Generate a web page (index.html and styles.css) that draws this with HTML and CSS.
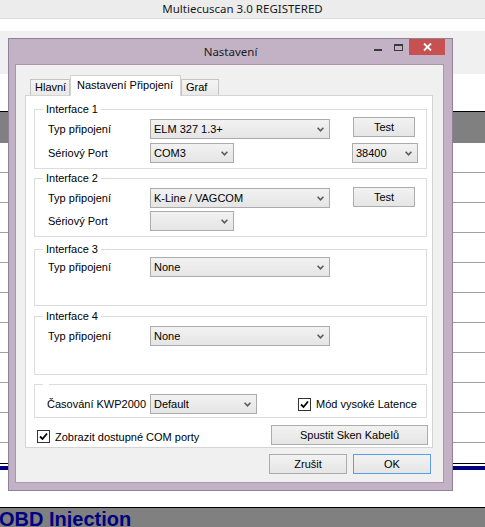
FILE: index.html
```html
<!DOCTYPE html>
<html>
<head>
<meta charset="utf-8">
<title>Nastavení</title>
<link rel="stylesheet" href="styles.css">
</head>
<body>
<div class="screen">
  <div class="app-title">Multiecuscan 3.0 REGISTERED</div>
  <div class="strip-white"></div>
  <div class="toolbar"></div>
  <div class="gap-white"></div>
  <div class="grid-head"></div>
  <div class="grid-row"></div>
  <div class="grid-row"></div>
  <div class="grid-row"></div>
  <div class="grid-row"></div>
  <div class="grid-row"></div>
  <div class="grid-row"></div>
  <div class="grid-row"></div>
  <div class="grid-row"></div>
  <div class="grid-row"></div>
  <div class="grid-row"></div>
  <div class="grid-tail"></div>
  <div class="rule-black"></div>
  <div class="rule-navy"></div>
  <div class="tail-gap"></div>
  <div class="section-head">OBD Injection</div>

  <div class="dialog">
    <div class="caption">
      <span></span>
      <span class="caption-text">Nastavení</span>
      <div class="caption-controls">
        <span class="ctl-min"></span>
        <span class="ctl-max"></span>
        <span class="ctl-close"><svg width="9" height="8" viewBox="0 0 9 8"><path d="M1 0.5 L8 7.5 M8 0.5 L1 7.5" stroke="#fff" stroke-width="1.8" fill="none"/></svg></span>
      </div>
    </div>
    <div class="client">
      <div class="tabs">
        <div class="tab tab-main">Hlavní</div>
        <div class="tab active">Nastavení Připojení</div>
        <div class="tab tab-graf">Graf</div>
      </div>
      <div class="panel">
        <div class="group g1">
          <div class="group-title">Interface 1</div>
          <div class="rows">
            <span class="lbl">Typ připojení</span>
            <div class="combo w-type"><span class="val">ELM 327 1.3+</span><svg class="chev" width="7" height="5" viewBox="0 0 7 5"><polyline points="0.6,0.8 3.5,3.8 6.4,0.8" stroke="#5a5a5a" stroke-width="1.6" fill="none"/></svg></div>
            <div class="btn btn-test">Test</div>
            <span class="lbl">Sériový Port</span>
            <div class="combo w-port"><span class="val">COM3</span><svg class="chev" width="7" height="5" viewBox="0 0 7 5"><polyline points="0.6,0.8 3.5,3.8 6.4,0.8" stroke="#5a5a5a" stroke-width="1.6" fill="none"/></svg></div>
            <div class="combo w-baud"><span class="val">38400</span><svg class="chev" width="7" height="5" viewBox="0 0 7 5"><polyline points="0.6,0.8 3.5,3.8 6.4,0.8" stroke="#5a5a5a" stroke-width="1.6" fill="none"/></svg></div>
          </div>
        </div>
        <div class="group g2">
          <div class="group-title">Interface 2</div>
          <div class="rows tight">
            <span class="lbl">Typ připojení</span>
            <div class="combo w-type"><span class="val">K-Line / VAGCOM</span><svg class="chev" width="7" height="5" viewBox="0 0 7 5"><polyline points="0.6,0.8 3.5,3.8 6.4,0.8" stroke="#5a5a5a" stroke-width="1.6" fill="none"/></svg></div>
            <div class="btn btn-test up1">Test</div>
            <span class="lbl">Sériový Port</span>
            <div class="combo w-port"><span class="val"></span><svg class="chev" width="7" height="5" viewBox="0 0 7 5"><polyline points="0.6,0.8 3.5,3.8 6.4,0.8" stroke="#5a5a5a" stroke-width="1.6" fill="none"/></svg></div>
          </div>
        </div>
        <div class="group g3">
          <div class="group-title">Interface 3</div>
          <div class="rows near">
            <span class="lbl">Typ připojení</span>
            <div class="combo w-type"><span class="val">None</span><svg class="chev" width="7" height="5" viewBox="0 0 7 5"><polyline points="0.6,0.8 3.5,3.8 6.4,0.8" stroke="#5a5a5a" stroke-width="1.6" fill="none"/></svg></div>
          </div>
        </div>
        <div class="group g4">
          <div class="group-title">Interface 4</div>
          <div class="rows">
            <span class="lbl">Typ připojení</span>
            <div class="combo w-type"><span class="val">None</span><svg class="chev" width="7" height="5" viewBox="0 0 7 5"><polyline points="0.6,0.8 3.5,3.8 6.4,0.8" stroke="#5a5a5a" stroke-width="1.6" fill="none"/></svg></div>
          </div>
        </div>
        <div class="group g5">
          <div class="group-title empty"></div>
          <div class="row-kwp">
            <span class="lbl-kwp">Časování KWP2000</span>
            <div class="combo w-kwp"><span class="val">Default</span><svg class="chev" width="7" height="5" viewBox="0 0 7 5"><polyline points="0.6,0.8 3.5,3.8 6.4,0.8" stroke="#5a5a5a" stroke-width="1.6" fill="none"/></svg></div>
            <label class="check-wrap latency">
              <span class="checkbox"><svg width="11" height="11" viewBox="0 0 11 11"><polyline points="2,5.5 4.5,8 9,2.5" stroke="#000" stroke-width="1.8" fill="none"/></svg></span>
              <span>Mód vysoké Latence</span>
            </label>
          </div>
        </div>
        <div class="panel-foot">
          <label class="check-wrap com">
            <span class="checkbox"><svg width="11" height="11" viewBox="0 0 11 11"><polyline points="2,5.5 4.5,8 9,2.5" stroke="#000" stroke-width="1.8" fill="none"/></svg></span>
            <span>Zobrazit dostupné COM porty</span>
          </label>
          <div class="btn btn-scan">Spustit Sken Kabelů</div>
        </div>
      </div>
      <div class="dialog-buttons">
        <div class="btn btn-dlg">Zrušit</div>
        <div class="btn btn-dlg btn-ok">OK</div>
      </div>
    </div>
  </div>
</div>
</body>
</html>
```
FILE: styles.css
```css
* { box-sizing: border-box; }
body {
  margin: 0;
  background: #fff;
  font-family: "Liberation Sans", Arial, sans-serif;
  font-size: 11px;
  color: #000;
}
.screen {
  position: relative;
  width: 485px;
  height: 527px;
  overflow: hidden;
  background: #fff;
}
.app-title {
  height: 19px;
  background: #ececec;
  border-bottom: 1px solid #dcdcdc;
  text-align: center;
  font-family: "Noto Sans", sans-serif;
  font-size: 11.5px;
  line-height: 18px;
  color: #1a1a1a;
}
.strip-white { height: 12px; }
.toolbar { height: 43px; background: #f0f0f0; }
.gap-white { height: 37px; }
.grid-head { height: 32px; border-top: 1px solid #000; background: #808080; }
.grid-row { height: 30px; border-bottom: 1px solid #a0a0a0; }
.grid-tail { height: 20px; }
.rule-black { height: 1px; background: #000; margin-bottom: 2px; }
.rule-navy { height: 4px; background: #000080; }
.tail-gap { height: 37px; }
.section-head {
  border-top: 1px solid #000;
  background: #808080;
  height: 30px;
  font-family: "Liberation Sans", Arial, sans-serif;
  font-weight: bold;
  font-size: 20px;
  line-height: 22px;
  color: #000080;
  text-indent: -1px;
  white-space: nowrap;
}

/* dialog */
.dialog {
  position: absolute;
  left: 8px;
  top: 38px;
  width: 445px;
  height: 453px;
  border: 1px solid #8e8396;
  background: #c3b2c6;
  padding: 0 8px 7px 6px;
  display: flex;
  flex-direction: column;
}
.caption {
  height: 25px;
  margin: 0 -8px 0 -6px;
  display: grid;
  grid-template-columns: 1fr auto 1fr;
  align-items: center;
}
.caption-text {
  font-family: "Noto Sans", sans-serif;
  font-size: 11.5px;
  line-height: 25px;
  color: #1a1a1a;
}
.caption-controls {
  justify-self: end;
  align-self: start;
  display: flex;
  align-items: flex-start;
  margin-right: 7px;
}
.ctl-min {
  width: 8px;
  height: 2px;
  background: #3a3a3a;
  margin-top: 10px;
  margin-right: 12px;
}
.ctl-max {
  width: 9px;
  height: 7px;
  border: 1px solid #3a3a3a;
  border-top-width: 2px;
  margin-top: 5px;
  margin-right: 6px;
}
.ctl-close {
  width: 36px;
  height: 16px;
  background: #c75050;
  display: flex;
  align-items: center;
  justify-content: center;
}
.client {
  height: 419px;
  border: 1px solid #a898aa;
  background: #f0f0f0;
  padding: 10px 10px 0 9px;
  display: flex;
  flex-direction: column;
}
.tabs {
  display: flex;
  align-items: flex-end;
  height: 20px;
  padding-left: 5px;
}
.tab {
  height: 16px;
  border: 1px solid #c4c4c4;
  border-bottom: none;
  background: linear-gradient(#f4f4f4, #e9e9e9);
  padding-left: 4px;
  line-height: 15px;
  white-space: nowrap;
}
.tab-main { width: 40px; }
.tab-graf { width: 38px; }
.tab.active {
  width: 111px;
  height: 21px;
  margin-bottom: -1px;
  background: #fff;
  border-color: #d2d2d2;
  padding-left: 6px;
  line-height: 19px;
  position: relative;
  z-index: 1;
}
.panel {
  height: 353px;
  border: 1px solid #d4d4d4;
  background: #fff;
  padding: 13px 5px 0 8px;
  display: flex;
  flex-direction: column;
}
.group {
  width: 393px;
  border: 1px solid #dcdcdc;
  display: flex;
  flex-direction: column;
}
.group-title {
  align-self: flex-start;
  height: 14px;
  margin: -8px 0 0 8px;
  padding: 0 3px;
  background: #fff;
  line-height: 14px;
  white-space: nowrap;
}
.group-title.empty { width: 6px; padding: 0; }
.g1 { height: 60px; }
.g2 { height: 59px; margin-top: 9px; }
.g3 { height: 57px; margin-top: 12px; }
.g4 { height: 59px; margin-top: 10px; }
.g5 { height: 34px; margin-top: 9px; }
.rows {
  display: grid;
  grid-template-columns: 102px 202px auto;
  grid-auto-rows: 20px;
  row-gap: 4px;
  align-items: center;
  margin-top: 3px;
  padding-left: 13px;
}
.rows.tight { row-gap: 3px; }
.rows.near { margin-top: 1px; }
.lbl { white-space: nowrap; }
.combo {
  justify-self: start;
  height: 20px;
  border: 1px solid #acacac;
  background: linear-gradient(#f2f2f2, #e5e5e5);
  display: flex;
  align-items: center;
  padding: 0 5px 0 3px;
  white-space: nowrap;
}
.combo .val { flex: 1; }
.chev { flex: none; }
.w-type { width: 180px; }
.w-port { width: 84px; }
.w-baud { width: 66px; }
.w-kwp { width: 107px; }
.btn {
  height: 20px;
  border: 1px solid #acacac;
  background: linear-gradient(#f2f2f2, #e5e5e5);
  display: flex;
  align-items: center;
  justify-content: center;
  white-space: nowrap;
}
.btn-test {
  width: 62px;
  justify-self: start;
  align-self: start;
  margin-left: 1px;
  margin-top: -2px;
}
.btn-test.up1 { margin-top: -1px; }
.row-kwp {
  display: flex;
  align-items: center;
  height: 20px;
  margin-top: 3px;
  padding-left: 12px;
}
.lbl-kwp { width: 103px; white-space: nowrap; }
.check-wrap {
  display: flex;
  align-items: center;
  gap: 5px;
  white-space: nowrap;
}
.latency { margin-left: 41px; }
.checkbox {
  width: 13px;
  height: 13px;
  border: 1px solid #333;
  background: #fff;
  display: flex;
  align-items: center;
  justify-content: center;
  flex: none;
}
.panel-foot {
  display: flex;
  height: 20px;
  margin-top: 7px;
}
.com {
  align-self: flex-start;
  margin-top: 5px;
  margin-left: 3px;
  height: 13px;
}
.btn-scan {
  width: 157px;
  margin-left: auto;
  margin-right: -1px;
}
.dialog-buttons {
  display: flex;
  justify-content: flex-end;
  gap: 6px;
  margin-top: 6px;
  padding-right: 2px;
}
.btn-dlg { width: 78px; }
.btn-ok { border-color: #5aa0e6; }
```
